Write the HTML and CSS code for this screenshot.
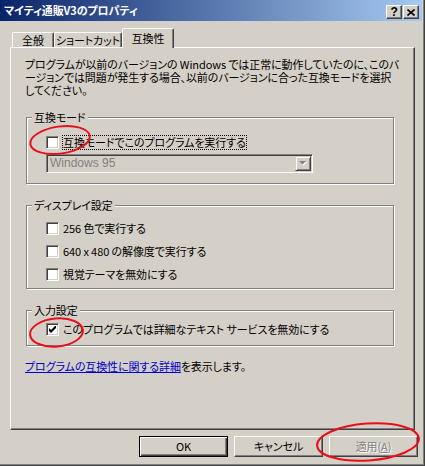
FILE: index.html
```html
<!DOCTYPE html>
<html lang="ja">
<head>
    <meta charset="UTF-8">
    <title>マイティ通販V3のプロパティ</title>
    <link rel="stylesheet" href="styles.css">
</head>
<body>
    <div class="window">
        <div class="titlebar">
            <span class="title">マイティ通販V3のプロパティ</span>
            <div class="caption-buttons">
                <div class="cap-btn help">?</div>
                <div class="cap-btn">
                    <svg width="8" height="7" viewBox="0 0 8 7"><path d="M0.5 0.5 L7.5 6.5 M7.5 0.5 L0.5 6.5" stroke="#000" stroke-width="1.6" fill="none"/></svg>
                </div>
            </div>
        </div>

        <div class="tabs">
            <div class="tab tab-general">全般</div>
            <div class="tab tab-shortcut">ショートカット</div>
            <div class="tab tab-compat active">互換性</div>
        </div>

        <div class="panel">
            <p class="intro">プログラムが以前のバージョンの Windows では正常に動作していたのに、このバ<br>ージョンでは問題が発生する場合、以前のバージョンに合った互換モードを選択<br>してください。</p>

            <div class="group group-mode">
                <span class="legend">互換モード</span>
                <div class="check-row">
                    <span class="checkbox"></span>
                    <span class="label focused">互換モードでこのプログラムを実行する</span>
                </div>
                <div class="combo">
                    <span class="combo-text">Windows 95</span>
                    <span class="combo-btn">
                        <svg width="8" height="5" viewBox="0 0 8 5"><path d="M1 1 H8 L4.5 4.5 Z" fill="#fff"/><path d="M0 0 H7 L3.5 3.5 Z" fill="#808080"/></svg>
                    </span>
                </div>
            </div>

            <div class="group group-display">
                <span class="legend">ディスプレイ設定</span>
                <div class="check-row">
                    <span class="checkbox"></span>
                    <span class="label">256 色で実行する</span>
                </div>
                <div class="check-row">
                    <span class="checkbox"></span>
                    <span class="label">640 x 480 の解像度で実行する</span>
                </div>
                <div class="check-row">
                    <span class="checkbox"></span>
                    <span class="label">視覚テーマを無効にする</span>
                </div>
            </div>

            <div class="group group-input">
                <span class="legend">入力設定</span>
                <div class="check-row">
                    <span class="checkbox checked">
                        <svg width="7" height="7" viewBox="0 0 7 7"><path d="M0 2 L2 4 L7 -1 V2 L2 7 L0 5 Z" fill="#000"/></svg>
                    </span>
                    <span class="label">このプログラムでは詳細なテキスト サービスを無効にする</span>
                </div>
            </div>

            <p class="more"><a href="#">プログラムの互換性に関する詳細</a>を表示します。</p>
        </div>

        <div class="buttons">
            <div class="btn default">OK</div>
            <div class="btn">キャンセル</div>
            <div class="btn disabled">適用(<u>A</u>)</div>
        </div>

        <!-- red marks drawn over the dialog -->
        <svg class="marks" width="425" height="466" viewBox="0 0 425 466">
            <ellipse cx="60" cy="140" rx="30" ry="13.5" transform="rotate(-8 60 140)"/>
            <ellipse cx="56.5" cy="332.5" rx="26.5" ry="14" transform="rotate(-5 56.5 332.5)"/>
            <ellipse cx="368" cy="442" rx="51" ry="18.5" transform="rotate(-4 368 442)"/>
        </svg>
    </div>
</body>
</html>
```

FILE: styles.css
```css
body {
    margin: 0;
    font-family: "MS UI Gothic", "Noto Sans CJK JP", sans-serif;
    font-size: 11px;
    letter-spacing: -0.1px;
    font-feature-settings: "palt";
    color: #000;
}

.window {
    position: relative;
    width: 425px;
    height: 466px;
    box-sizing: border-box;
    background-color: #d4d0c8;
    border-right: 1px solid #404040;
    border-bottom: 1px solid #404040;
    box-shadow: inset -1px -1px 0 #808080;
    overflow: hidden;
}

.titlebar {
    display: flex;
    justify-content: space-between;
    align-items: flex-start;
    height: 21px;
    margin-right: 2px;
    padding: 0 3px 0 4px;
    background: linear-gradient(to right, #0a246a, #a6caf0);
}

.title {
    color: #fff;
    font-weight: bold;
    line-height: 21px;
}

.caption-buttons {
    display: flex;
    gap: 1px;
    margin-top: 5px;
}

.cap-btn {
    display: flex;
    align-items: center;
    justify-content: center;
    width: 16px;
    height: 14px;
    box-sizing: border-box;
    background-color: #d4d0c8;
    border: 1px solid;
    border-color: #fff #404040 #404040 #fff;
    box-shadow: inset -1px -1px 0 #808080;
}

.cap-btn.help {
    font-family: "Liberation Sans", Arial, sans-serif;
    font-weight: bold;
    font-size: 12px;
    line-height: 12px;
}

.tabs {
    position: relative;
    z-index: 1;
    display: flex;
    align-items: flex-end;
    height: 27px;
    margin-bottom: -1px;
    padding-left: 12px;
}

.tab {
    height: 15px;
    margin-bottom: 1px;
    box-sizing: border-box;
    border: 1px solid;
    border-color: #fff #404040 transparent #fff;
    border-bottom: none;
    border-radius: 2px 2px 0 0;
    box-shadow: inset -1px 0 0 #808080;
    text-align: center;
    line-height: 15px;
    white-space: nowrap;
    background-color: #d4d0c8;
}

.tab-general {
    width: 42px;
}

.tab-shortcut {
    width: 68px;
}

.tab-compat {
    width: 52px;
}

.tab.active {
    height: 20px;
    margin-bottom: 0;
    line-height: 18px;
}

.panel {
    width: 405px;
    height: 383px;
    margin-left: 10px;
    box-sizing: border-box;
    padding: 10px 20px 0 15px;
    border: 1px solid;
    border-color: #fff #404040 #404040 #fff;
    box-shadow: inset -1px -1px 0 #808080;
}

.intro {
    margin: 0 0 0 -1px;
    line-height: 13px;
    white-space: nowrap;
}

.group {
    position: relative;
    width: 368px;
    box-sizing: border-box;
    border: 1px solid #808080;
    box-shadow: inset 1px 1px 0 #fff, 1px 1px 0 #fff;
}

.legend {
    position: absolute;
    top: -7px;
    left: 5px;
    padding: 0 2px;
    line-height: 13px;
    background-color: #d4d0c8;
}

.group-mode {
    margin-top: 20px;
    padding: 17px 0 10px 19px;
}

.group-display {
    margin-top: 21px;
    padding: 15px 0 6px 19px;
    display: flex;
    flex-direction: column;
    gap: 8px;
}

.group-input {
    margin-top: 21px;
    padding: 11px 0 8px 19px;
}

.check-row {
    display: flex;
    align-items: center;
    gap: 4px;
    height: 15px;
}

.checkbox {
    display: flex;
    align-items: center;
    justify-content: center;
    width: 13px;
    height: 13px;
    box-sizing: border-box;
    background-color: #fff;
    border: 1px solid;
    border-color: #808080 #fff #fff #808080;
    box-shadow: inset 1px 1px 0 #404040, inset -1px -1px 0 #d4d0c8;
}

.label {
    line-height: 15px;
    white-space: nowrap;
}

.label.focused {
    margin-left: -1px;
    padding: 0 1px;
    outline: 1px dotted #000;
    outline-offset: -1px;
}

.combo {
    display: flex;
    justify-content: space-between;
    width: 267px;
    height: 19px;
    margin-top: 4px;
    box-sizing: border-box;
    border: 1px solid;
    border-color: #808080 #fff #fff #808080;
    box-shadow: inset 1px 1px 0 #404040, inset -1px -1px 0 #d4d0c8;
    padding: 1px;
}

.combo-text {
    padding-left: 2px;
    font-family: "Liberation Sans", Arial, sans-serif;
    font-size: 12px;
    letter-spacing: 0;
    line-height: 15px;
    color: #808080;
}

.combo-btn {
    display: flex;
    align-items: center;
    justify-content: center;
    width: 16px;
    height: 15px;
    box-sizing: border-box;
    border: 1px solid;
    border-color: #d4d0c8 #404040 #404040 #d4d0c8;
    box-shadow: inset 1px 1px 0 #fff, inset -1px -1px 0 #808080;
}

.more {
    margin: 14px 0 0 -1px;
    line-height: 13px;
}

.more a {
    color: #0000cc;
}

.buttons {
    display: flex;
    justify-content: flex-end;
    gap: 6px;
    margin-top: 6px;
    padding-right: 6px;
}

.btn {
    width: 89px;
    height: 21px;
    box-sizing: border-box;
    border: 1px solid;
    border-color: #fff #404040 #404040 #fff;
    box-shadow: inset -1px -1px 0 #808080;
    text-align: center;
    line-height: 19px;
}

.btn.default {
    border-color: #000;
    box-shadow: inset 1px 1px 0 #fff, inset -1px -1px 0 #404040, inset -2px -2px 0 #808080;
}

.btn.disabled {
    color: #808080;
    text-shadow: 1px 1px 0 #fff;
}

.marks {
    position: absolute;
    top: 0;
    left: 0;
    pointer-events: none;
}

.marks ellipse {
    fill: none;
    stroke: #e8101a;
    stroke-width: 2;
}
```
